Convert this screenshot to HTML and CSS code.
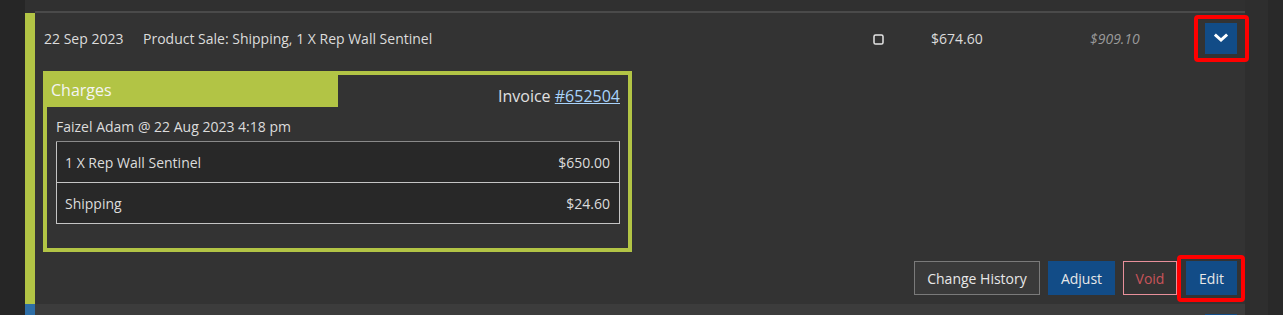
FILE: index.html
```html
<!DOCTYPE html>
<html lang="en">
	<head>
		<meta charset="UTF-8">
		<meta content="width=device-width, initial-scale=1.0" name="viewport">
		<link rel="stylesheet" href="styles.css">
		<title>Transactions</title>
	</head>
	<body>
		<div class="page">
			<div class="gutter"></div>
			<div class="list">
				<div class="list-rule"></div>
				<div class="txn txn-sale">
					<div class="txn-summary">
						<span class="col-date">22 Sep 2023</span>
						<span class="col-desc">Product Sale: Shipping, 1 X Rep Wall Sentinel</span>
						<span class="col-check">
							<svg width="11" height="11" viewBox="0 0 11 11"><rect x="1" y="1" width="9" height="9" rx="1.6" fill="none" stroke="#e6e6e6" stroke-width="1.5"/></svg>
						</span>
						<span class="col-amount">$674.60</span>
						<span class="col-total">$909.10</span>
						<span class="col-toggle">
							<button class="toggle-btn marked marked-toggle" type="button">
								<svg width="14" height="10" viewBox="0 0 14 10"><polyline points="2,2.5 7,7 12,2.5" fill="none" stroke="#fff" stroke-width="3" stroke-linecap="square"/></svg>
							</button>
						</span>
					</div>
					<div class="txn-details">
						<div class="charges">
							<div class="charges-top">
								<div class="charges-title">Charges</div>
								<div class="invoice">Invoice <a href="#">#652504</a></div>
							</div>
							<div class="charges-by">Faizel Adam @ 22 Aug 2023 4:18 pm</div>
							<table class="charges-table">
								<tr>
									<td>1 X Rep Wall Sentinel</td>
									<td class="price">$650.00</td>
								</tr>
								<tr>
									<td>Shipping</td>
									<td class="price">$24.60</td>
								</tr>
							</table>
						</div>
						<div class="actions">
							<button class="btn btn-plain" type="button">Change History</button>
							<button class="btn btn-blue btn-adjust" type="button">Adjust</button>
							<button class="btn btn-void" type="button">Void</button>
							<button class="btn btn-blue btn-edit marked marked-edit" type="button">Edit</button>
						</div>
					</div>
				</div>
				<div class="txn txn-next">
					<div class="txn-summary">
						<span class="col-date"></span>
						<span class="col-desc"></span>
						<span class="col-check"></span>
						<span class="col-amount"></span>
						<span class="col-total"></span>
						<span class="col-toggle"><button class="toggle-btn" type="button"></button></span>
					</div>
				</div>
			</div>
			<div class="rail"></div>
			<div class="scroll"></div>
		</div>
	</body>
</html>
```

FILE: styles.css
```css
body {
    margin: 0;
    background-color: #262626;
    font-family: 'Open Sans', sans-serif;
    font-size: 14px;
    color: #dcdcdc;
    overflow: hidden;
}

.page {
    display: flex;
    height: 315px;
    overflow: hidden;
}

.gutter {
    width: 25px;
    background-color: #262626;
}

.list {
    width: 1220px;
    padding-top: 11px;
    background-color: #303030;
}

.list-rule {
    height: 2px;
    margin-left: 10px;
    background-color: #4a4a4a;
}

.rail {
    width: 23px;
    background-color: #2e2e2e;
}

.scroll {
    flex: 1;
    background-color: #292929;
}

.txn {
    border-left: 10px solid #B2C445;
    background-color: #333;
}

.txn-next {
    border-left-color: #2E6EA6;
    background-color: #3C3C3C;
}

.txn-summary {
    display: flex;
    align-items: center;
    height: 50px;
    padding: 0 8px 0 9px;
}

.col-date {
    width: 99px;
}

.col-desc {
    width: 730px;
}

.col-check {
    width: 58px;
    display: flex;
    align-items: center;
    padding-top: 2px;
}

.col-amount {
    width: 159px;
}

.col-total {
    width: 115px;
    font-style: italic;
    color: #9a9a9a;
}

.col-toggle {
    width: 32px;
}

.toggle-btn {
    display: flex;
    align-items: center;
    justify-content: center;
    width: 32px;
    height: 31px;
    padding: 0;
    border: none;
    background-color: #124C87;
    cursor: pointer;
}

.txn-next .txn-summary {
    align-items: flex-start;
    padding-top: 10px;
}

.marked {
    position: relative;
}

.marked::after {
    content: '';
    position: absolute;
    border: 4px solid #FF0000;
    border-radius: 4px;
    pointer-events: none;
}

.marked-toggle::after {
    top: -8px;
    bottom: -8px;
    left: -11px;
    right: -12px;
}

.marked-edit::after {
    top: -7px;
    bottom: -8px;
    left: -10px;
    right: -9px;
}

.txn-details {
    padding: 8px 8px 0 8px;
}

.charges {
    width: 581px;
    border: 4px solid #B2C445;
    padding-bottom: 24px;
    margin-bottom: 9px;
}

.charges-top {
    display: flex;
    justify-content: space-between;
    align-items: flex-end;
}

.charges-title {
    width: 287px;
    height: 32px;
    padding-left: 4px;
    line-height: 30px;
    font-size: 16px;
    color: #f4f4f4;
    background-color: #B2C445;
}

.invoice {
    padding-right: 8px;
    font-size: 16px;
    line-height: 21px;
    color: #e0e0e0;
}

.invoice a {
    color: #A9D3FB;
}

.charges-by {
    margin: 10px 0 4px 9px;
    line-height: 20px;
}

.charges-table {
    width: 564px;
    margin-left: 9px;
    border-collapse: collapse;
    background-color: #282828;
}

.charges-table td {
    height: 40px;
    padding: 0 9px 0 8px;
    border: 1px solid #c4c4c4;
}

.charges-table tr:first-child td {
    border-top-color: #8a8a8a;
}

.charges-table td:first-child {
    border-right: none;
}

.charges-table td.price {
    border-left: none;
    text-align: right;
}

.actions {
    display: flex;
    justify-content: flex-end;
    gap: 8px;
    padding-bottom: 9px;
}

.btn {
    height: 34px;
    padding: 0;
    font-family: 'Open Sans', sans-serif;
    font-size: 14px;
    border: 1px solid transparent;
    cursor: pointer;
}

.btn-plain {
    width: 126px;
    color: #e8e8e8;
    background-color: #3A3A3A;
    border-color: #7a7a7a;
}

.btn-blue {
    color: #e8e8e8;
    background-color: #124C87;
    border-color: #124C87;
}

.btn-adjust {
    width: 67px;
}

.btn-void {
    width: 54px;
    margin-right: 1px;
    color: #C9545A;
    background-color: #333;
    border-color: #E8909A;
}

.btn-edit {
    width: 51px;
}
```
